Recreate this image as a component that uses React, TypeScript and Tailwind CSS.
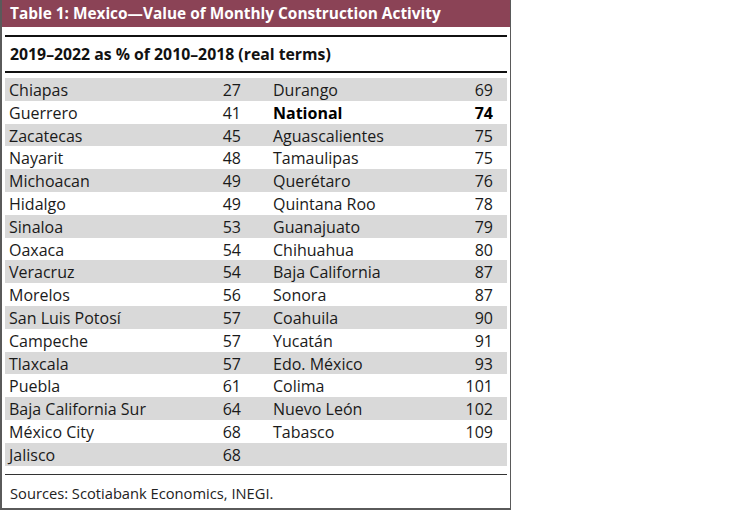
import React from "react";

const left: [string, string][] = [
  ["Chiapas", "27"],
  ["Guerrero", "41"],
  ["Zacatecas", "45"],
  ["Nayarit", "48"],
  ["Michoacan", "49"],
  ["Hidalgo", "49"],
  ["Sinaloa", "53"],
  ["Oaxaca", "54"],
  ["Veracruz", "54"],
  ["Morelos", "56"],
  ["San Luis Potosí", "57"],
  ["Campeche", "57"],
  ["Tlaxcala", "57"],
  ["Puebla", "61"],
  ["Baja California Sur", "64"],
  ["México City", "68"],
  ["Jalisco", "68"],
];

const right: [string, string][] = [
  ["Durango", "69"],
  ["National", "74"],
  ["Aguascalientes", "75"],
  ["Tamaulipas", "75"],
  ["Querétaro", "76"],
  ["Quintana Roo", "78"],
  ["Guanajuato", "79"],
  ["Chihuahua", "80"],
  ["Baja California", "87"],
  ["Sonora", "87"],
  ["Coahuila", "90"],
  ["Yucatán", "91"],
  ["Edo. México", "93"],
  ["Colima", "101"],
  ["Nuevo León", "102"],
  ["Tabasco", "109"],
  ["", ""],
];

export default function App() {
  return (
    <div
      className="w-[751px] h-[512px] bg-white"
      style={{ fontFamily: '"Open Sans", "Noto Sans", sans-serif' }}
    >
      <div className="w-[511px] h-[510px] border-l-2 border-r border-b-2 border-[#5a5a5a] flex flex-col">
        <div className="h-[27px] bg-[#8b4356] text-white font-bold text-[15.4px] leading-[27px] pl-[8px]">
          Table 1: Mexico—Value of Monthly Construction Activity
        </div>
        <div className="mx-[3px] mt-[8px] border-t-2 border-[#111]" />
        <div className="mx-[3px] h-[34px] flex items-center pl-[5px] pt-[1px] font-bold text-[15.8px] text-[#111]">
          2019–2022 as % of 2010–2018 (real terms)
        </div>
        <div className="mx-[3px] border-t-2 border-[#111]" />
        <div className="mx-[3px] mt-[5px] flex flex-col">
          {left.map((l, i) => {
            const r = right[i];
            const bold = r[0] === "National";
            return (
              <div
                key={i}
                className={`h-[22.8px] grid grid-cols-[250px_250px] text-[16px] text-[#1a1a1a] leading-[25px] ${
                  i % 2 === 0 ? "bg-[#d9d9d9]" : "bg-white"
                }`}
              >
                <div className="flex justify-between pl-[4px] pr-[14px]">
                  <span>{l[0]}</span>
                  <span>{l[1]}</span>
                </div>
                <div
                  className={`flex justify-between pl-[18px] pr-[12px] ${
                    bold ? "font-bold text-black" : ""
                  }`}
                >
                  <span>{r[0]}</span>
                  <span>{r[1]}</span>
                </div>
              </div>
            );
          })}
        </div>
        <div className="mx-[3px] mt-[8px] border-t border-[#333]" />
        <div className="pl-[8px] pt-[7px] text-[14.7px] text-[#222]">
          Sources: Scotiabank Economics, INEGI.
        </div>
      </div>
    </div>
  );
}
